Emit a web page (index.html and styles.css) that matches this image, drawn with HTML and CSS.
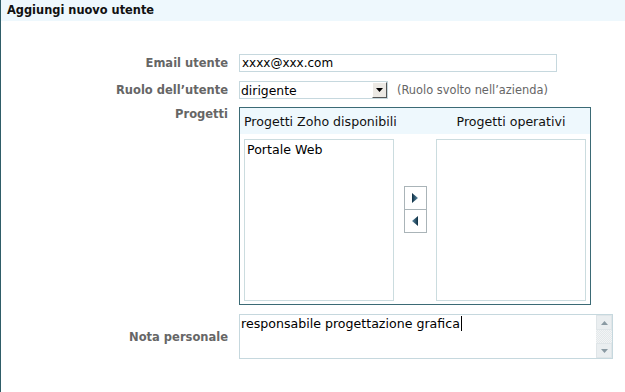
FILE: index.html
```html
<!DOCTYPE html>
<html lang="it">
<head>
  <meta charset="UTF-8">
  <title>Aggiungi nuovo utente</title>
  <link rel="stylesheet" href="styles.css">
</head>
<body>
  <div class="panel">
    <div class="panel-head">Aggiungi nuovo utente</div>

    <form class="user-form">
      <!-- Email -->
      <div class="form-row row-email">
        <label class="field-label">Email utente</label>
        <input class="text-input" type="text" value="xxxx@xxx.com">
      </div>

      <!-- Ruolo -->
      <div class="form-row row-role">
        <label class="field-label">Ruolo dell’utente</label>
        <div class="role-field">
          <div class="select-wrap">
            <select class="select-input">
              <option>dirigente</option>
            </select>
            <span class="select-btn">
              <svg width="7" height="4" viewBox="0 0 7 4"><path d="M0 0h7L3.5 4z" fill="#000"/></svg>
            </span>
          </div>
          <span class="hint">(Ruolo svolto nell’azienda)</span>
        </div>
      </div>

      <!-- Progetti -->
      <div class="form-row row-projects">
        <label class="field-label">Progetti</label>
        <div class="projects-box">
          <div class="projects-head">
            <span class="head-left">Progetti Zoho disponibili</span>
            <span></span>
            <span class="head-right">Progetti operativi</span>
          </div>
          <div class="projects-body">
            <div class="list-box">
              <div class="list-item">Portale Web</div>
            </div>
            <div class="move-btns">
              <button type="button" class="move-btn">
                <svg width="6" height="10" viewBox="0 0 6 10"><defs><linearGradient id="ga" x1="0" x2="1"><stop offset="0" stop-color="#0d2f44"/><stop offset="1" stop-color="#5d8aa3"/></linearGradient></defs><path d="M0 0L6 5L0 10z" fill="url(#ga)"/></svg>
              </button>
              <button type="button" class="move-btn">
                <svg width="6" height="10" viewBox="0 0 6 10"><defs><linearGradient id="gb" x1="1" x2="0"><stop offset="0" stop-color="#0d2f44"/><stop offset="1" stop-color="#5d8aa3"/></linearGradient></defs><path d="M6 0L0 5L6 10z" fill="url(#gb)"/></svg>
              </button>
            </div>
            <div class="list-box"></div>
          </div>
        </div>
      </div>

      <!-- Nota -->
      <div class="form-row row-note">
        <label class="field-label">Nota personale</label>
        <div class="note-wrap">
          <div class="note-text">responsabile progettazione grafica<span class="caret"></span></div>
          <div class="scrollbar">
            <span class="scroll-btn">
              <svg width="7" height="4" viewBox="0 0 7 4"><path d="M0 4h7L3.5 0z" fill="#8a9aa3"/></svg>
            </span>
            <span class="scroll-track"></span>
            <span class="scroll-btn">
              <svg width="7" height="4" viewBox="0 0 7 4"><path d="M0 0h7L3.5 4z" fill="#8a9aa3"/></svg>
            </span>
          </div>
        </div>
      </div>
    </form>
  </div>
</body>
</html>
```

FILE: styles.css
```css
/* Aggiungi nuovo utente */
body {
  margin: 0;
  padding: 0;
  background-color: white;
  font-family: "DejaVu Sans", Verdana, sans-serif;
  font-size: 12px;
  color: black;
}

.panel {
  border-left: 1px solid #2f5d68;
  height: 392px;
  box-sizing: border-box;
}

.panel-head {
  height: 21px;
  line-height: 21px;
  padding-left: 6px;
  background-color: #eef8fd;
  font-weight: bold;
  font-size: 11.4px;
  color: #111;
}

.user-form {
  padding-top: 33px;
}

.form-row {
  display: grid;
  grid-template-columns: 227px 1fr;
  column-gap: 11px;
  align-items: center;
}

.row-role {
  margin-top: 9px;
}

.row-projects {
  margin-top: 8px;
  align-items: start;
}

.row-note {
  margin-top: 9px;
}

.field-label {
  text-align: right;
  font-weight: bold;
  font-size: 11.5px;
  color: #666;
}

.row-projects .field-label {
  line-height: 14px;
}

.text-input {
  width: 318px;
  height: 18px;
  box-sizing: border-box;
  border: 1px solid #c6d8de;
  padding: 0 2px;
  font-family: inherit;
  font-size: 12px;
  color: black;
  outline: none;
}

.role-field {
  display: flex;
  align-items: center;
  gap: 9px;
}

.select-wrap {
  position: relative;
  width: 149px;
  height: 18px;
}

.select-input {
  appearance: none;
  width: 100%;
  height: 18px;
  box-sizing: border-box;
  border: 1px solid #c6d8de;
  padding: 0 1px;
  background: white;
  font-family: inherit;
  font-size: 12.4px;
  color: black;
  outline: none;
}

.select-btn {
  position: absolute;
  right: 1px;
  top: 1px;
  width: 15px;
  height: 16px;
  box-sizing: border-box;
  display: flex;
  align-items: center;
  justify-content: center;
  background: #ece9e4;
  border: 1px solid;
  border-color: #fff #555 #555 #fff;
}

.hint {
  font-size: 11.4px;
  color: #666;
}

.projects-box {
  width: 352px;
  box-sizing: border-box;
  border: 1px solid #3b6a75;
  padding-bottom: 3px;
  font-size: 12.6px;
}

.projects-head,
.projects-body {
  display: grid;
  grid-template-columns: 150px 42px 150px;
  padding: 0 4px;
}

.projects-head {
  height: 26px;
  align-items: center;
  background-color: #eef8fd;
  color: #111;
  white-space: nowrap;
}

.head-right {
  text-align: center;
}

.projects-body {
  margin-top: 5px;
}

.list-box {
  height: 162px;
  box-sizing: border-box;
  border: 1px solid #cbdcdf;
  padding: 1px 2px;
}

.list-item {
  line-height: 18px;
}

.move-btns {
  display: flex;
  flex-direction: column;
  align-items: center;
  padding-top: 47px;
}

.move-btn {
  width: 23px;
  height: 24px;
  display: flex;
  align-items: center;
  justify-content: center;
  padding: 0;
  background: white;
  border: 1px solid #aab4b8;
}

.move-btn + .move-btn {
  margin-top: -1px;
}

.note-wrap {
  display: flex;
  width: 374px;
  height: 45px;
  box-sizing: border-box;
  border: 1px solid #c6d8de;
}

.note-text {
  flex: 1;
  padding: 0 1px;
  font-size: 12.6px;
  line-height: 17px;
  color: black;
}

.caret {
  display: inline-block;
  width: 1px;
  height: 15px;
  margin-left: 1px;
  vertical-align: -3px;
  background: black;
}

.scrollbar {
  width: 16px;
  display: flex;
  flex-direction: column;
  background: repeating-conic-gradient(#f2f4f5 0 25%, #e3e8ea 0 50%) 0 0 / 2px 2px;
}

.scroll-btn {
  height: 15px;
  display: flex;
  align-items: center;
  justify-content: center;
  background: #eaeef0;
  border: 1px solid #dfe5e8;
  box-sizing: border-box;
}

.scroll-track {
  flex: 1;
}
```
